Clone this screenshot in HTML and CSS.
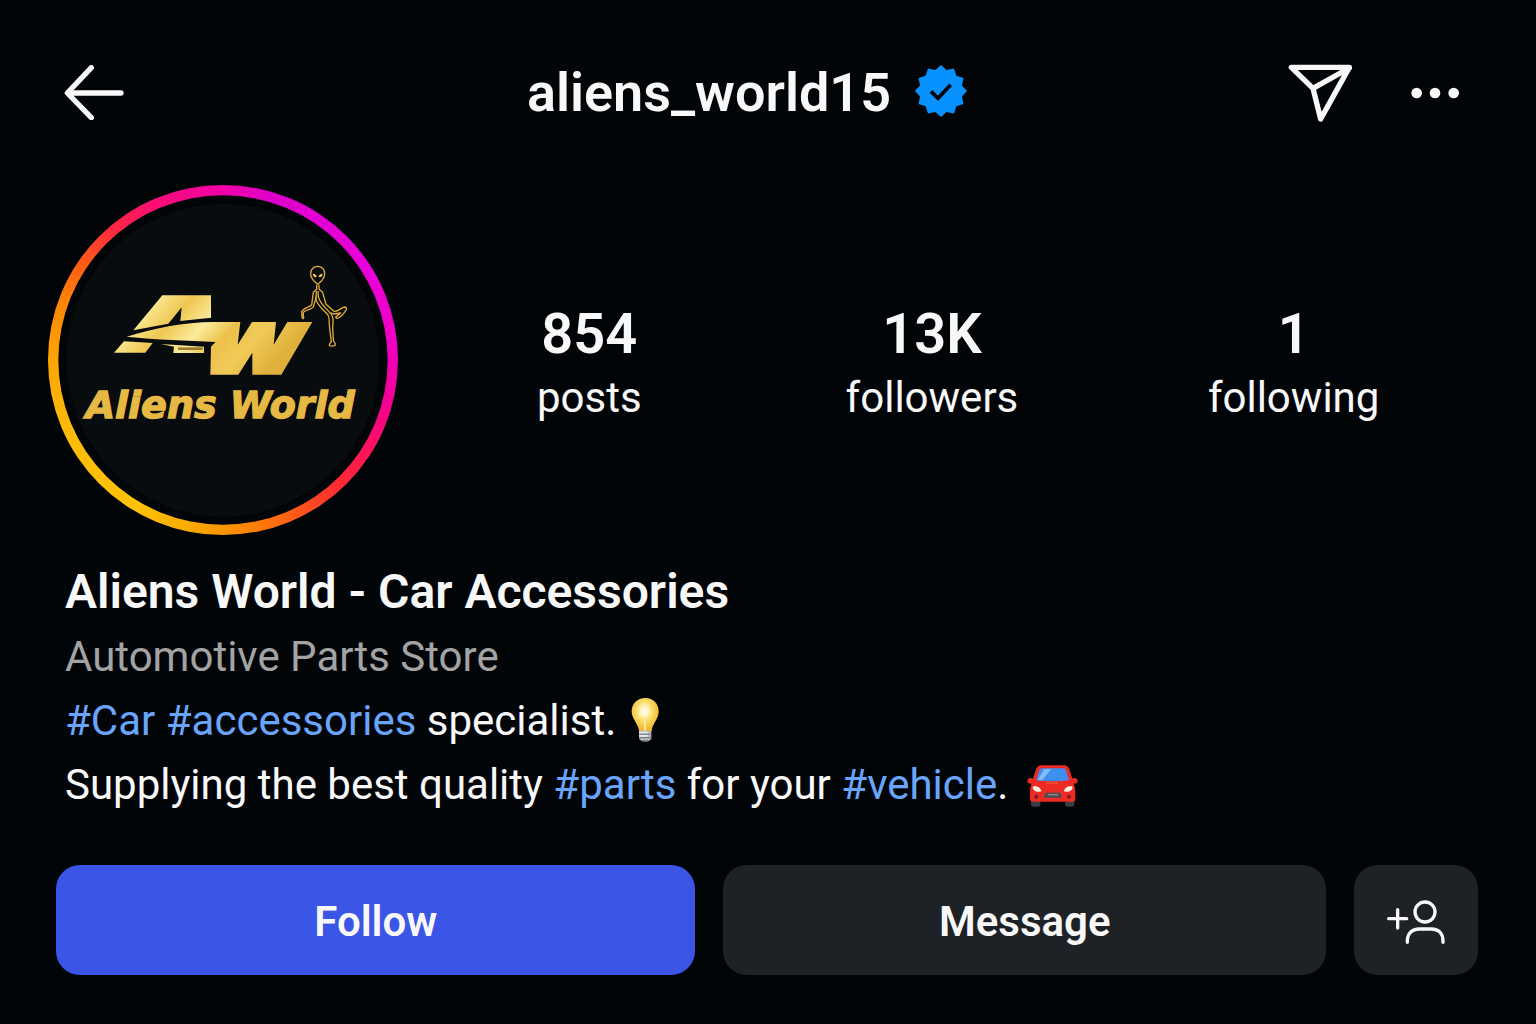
FILE: index.html
```html
<!DOCTYPE html>
<html lang="en">
  <head>
    <meta charset="UTF-8" />
    <meta name="viewport" content="width=device-width, initial-scale=1.0" />
    <title>aliens_world15</title>
    <link rel="stylesheet" href="styles.css">
  </head>
  <body>
    <header class="top-bar">
      <button class="icon-button" aria-label="Back">
        <svg class="icon-back" viewBox="42 44 180 165">
          <path d="M124 52L52 128L124 202M54 128H213" />
        </svg>
      </button>
      <div class="title">
        <h1>aliens_world15</h1>
        <svg class="badge" viewBox="0 0 156 156" role="img" aria-label="Verified">
          <path class="badge-shape" d="" />
          <path class="badge-check" d="M48 79L69 100L107 59" />
        </svg>
      </div>
      <div class="top-actions">
        <button class="icon-button" aria-label="Share">
          <svg class="icon-send" viewBox="54 38 195 174">
            <path d="M64 48H238L152 203L129 111ZM129 111L238 50" />
          </svg>
        </button>
        <button class="icon-button" aria-label="More">
          <svg class="icon-more" viewBox="423 106 147 36">
            <circle cx="440" cy="124" r="16" />
            <circle cx="495" cy="124" r="16" />
            <circle cx="551" cy="124" r="16" />
          </svg>
        </button>
      </div>
    </header>

    <main>
      <section class="profile">
        <a href="#story" class="avatar" aria-label="Aliens World story">
          <svg viewBox="24 30 1050 1050">
            <defs>
              <linearGradient id="gold" x1="0" y1="0" x2="1" y2="0.35">
                <stop offset="0" stop-color="#e9c95f" />
                <stop offset="0.22" stop-color="#f8e58c" />
                <stop offset="0.36" stop-color="#efc650" />
                <stop offset="0.52" stop-color="#fbeb9c" />
                <stop offset="0.66" stop-color="#ecc14a" />
                <stop offset="0.8" stop-color="#f0ca58" />
                <stop offset="1" stop-color="#dfb03a" />
              </linearGradient>
            </defs>
            <circle class="ring-gap" cx="549" cy="555" r="494" />
            <circle class="disc" cx="549" cy="556" r="469" />
            <!-- monogram -->
            <path class="mark" transform="translate(180 225)" d="M100 241L187 136H333V203L241 213L245 172L205 221ZM80 260C160 236 250 216 340 216H421L413 284L456 216H528L521 284L562 216H637L544 374H457V308L415 374H331L333 290L347 276C260 270 170 270 80 260ZM42 308L72 274L158 279L136 308ZM182 282L312 290V309H220L222 290Z" />
            <path class="mark-line" transform="translate(180 225)" d="M234 296H308" />
            <!-- alien -->
            <g class="alien" transform="translate(750 240)">
              <path d="M83 34C96 34 104 44 104 56C104 69 92 81 83 88C74 81 62 69 62 56C62 44 70 34 83 34Z" />
              <path class="eyes" d="M68 56C75 56 80 60 80 66C73 68 69 63 68 56ZM98 56C91 56 86 60 86 66C93 68 97 63 98 56Z" />
              <path d="M80 89V103L70 112L65 150C56 158 40 158 35 170L36 187C40 194 43 190 40 184V172C46 163 66 164 70 156L79 124" />
              <path d="M87 89V103L98 112L108 148L132 169C142 172 146 162 163 156C172 156 171 163 165 170C158 180 148 190 140 190L137 186L152 174L130 177L122 173" />
              <path d="M79 108L78 134C84 154 99 162 114 180C120 190 116 198 119 220L124 260L118 268C116 276 132 274 136 270C138 262 130 262 130 256L128 215C130 200 132 190 124 178L106 158C94 146 88 138 85 124L84 108" />
            </g>
            <text class="wordmark" x="137" y="728">Aliens World</text>
          </svg>
        </a>
        <ul class="stats">
          <li><strong>854</strong><span>posts</span></li>
          <li><a href="#followers"><strong>13K</strong><span>followers</span></a></li>
          <li><a href="#following"><strong>1</strong><span>following</span></a></li>
        </ul>
      </section>

      <section class="bio">
        <h2>Aliens World - Car Accessories</h2>
        <p class="category">Automotive Parts Store</p>
        <p>
          <a href="#car">#Car</a> <a href="#accessories">#accessories</a> specialist.
          <svg class="emoji-bulb" viewBox="30 18 90 138" role="img" aria-label="Light bulb">
            <defs>
              <radialGradient id="bulb" cx="0.47" cy="0.4" r="0.6">
                <stop offset="0" stop-color="#ffffff" />
                <stop offset="0.22" stop-color="#fff6c4" />
                <stop offset="0.5" stop-color="#fbdc68" />
                <stop offset="1" stop-color="#f0b429" />
              </radialGradient>
            </defs>
            <path fill="url(#bulb)" d="M73 21C97 21 113 38 113 61C113 84 95 96 92 120H54C51 96 32 84 32 61C32 38 49 21 73 21Z" />
            <path fill="#f7e9a0" d="M69 78H75V119H69Z" />
            <path fill="#b9bcc0" d="M54 119H91V143L83 151H63L54 143Z" />
            <path fill="#eceef0" d="M54 122H80V127H54ZM54 132H80V137H54Z" />
            <path fill="#74777b" d="M54 128H91V131H54ZM54 138H91V142H54ZM62 147H84L80 152H66Z" />
          </svg>
        </p>
        <p>
          Supplying the best quality <a href="#parts">#parts</a> for your <a href="#vehicle">#vehicle</a>.
          <svg class="emoji-car" viewBox="36 38 153 126" role="img" aria-label="Car">
            <rect fill="#3a3d42" x="48" y="138" width="28" height="25" rx="8" />
            <rect fill="#3a3d42" x="150" y="138" width="28" height="25" rx="8" />
            <path fill="#ee2a24" d="M78 39H148C157 39 161 46 164 54L172 79C178 75 188 78 188 86C188 93 182 94 176 94C180 102 181 112 181 126V140C181 146 177 148 172 148H54C49 148 45 146 45 140V126C45 112 46 102 50 94C43 94 37 93 37 86C37 78 47 75 54 79L62 54C65 46 69 39 78 39Z" />
            <path fill="#3f8ff0" d="M82 48H144C149 48 152 51 154 56L162 84C130 88 96 88 64 84L72 56C74 51 77 48 82 48Z" />
            <path fill="#82bbfa" d="M88 50H108L82 84L68 83Z" />
            <path fill="#fff3e6" d="M53 103C65 99 76 105 80 117C70 120 54 119 53 103ZM173 103C161 99 150 105 146 117C156 120 172 119 173 103Z" />
            <path fill="#4a4c52" d="M92 121H136L140 136H86Z" />
            <path fill="#8d8f94" d="M98 125H130V129H98Z" />
            <circle fill="#71201f" cx="64" cy="133" r="6" />
            <circle fill="#71201f" cx="162" cy="133" r="6" />
            <path stroke="#ff9a3c" stroke-width="3" stroke-dasharray="4 3" d="M94 92H126" />
          </svg>
        </p>
      </section>

      <section class="actions">
        <button class="follow">Follow</button>
        <button>Message</button>
        <button class="suggest" aria-label="Suggested accounts">
          <svg viewBox="130 130 180 138">
            <path d="M138 189H192M165 162V217" />
            <circle cx="247" cy="169" r="30" />
            <path d="M194 260V256C194 234 208 220 230 220H266C288 220 301 234 301 256V260" />
          </svg>
        </button>
      </section>
    </main>

    <script>
      // twelve-point edge of the verified badge
      var points = [];
      for (var i = 0; i < 24; i++) {
        var r = i % 2 ? 65 : 78;
        var a = (i * Math.PI) / 12;
        points.push((78 + r * Math.sin(a)).toFixed(1) + " " + (78 - r * Math.cos(a)).toFixed(1));
      }
      document.querySelector(".badge-shape").setAttribute("d", "M" + points.join("L") + "Z");
    </script>
  </body>
</html>
```
FILE: styles.css
```css
* {
  box-sizing: border-box;
}

body {
  margin: 0;
  background-color: #020508;
  color: #f8f8f8;
  font-family: Roboto, sans-serif;
  font-size: 42px;
  line-height: 64px;
}

h1,
h2,
p,
ul {
  margin: 0;
  padding: 0;
}

a {
  color: inherit;
  text-decoration: none;
}

button {
  border: none;
  padding: 0;
  color: inherit;
  font: inherit;
  cursor: pointer;
}

svg {
  display: block;
  fill: none;
}

.top-bar {
  display: grid;
  grid-template-columns: 1fr auto 1fr;
  align-items: center;
  height: 185px;
  padding: 0 76px 0 64px;
}

.icon-button {
  justify-self: start;
  background: none;
}

.icon-button path {
  stroke: #f8f8f8;
  stroke-width: 16;
  stroke-linecap: round;
  stroke-linejoin: round;
}

.icon-back {
  width: 60px;
}

.icon-send {
  width: 65px;
}

.icon-more {
  width: 49px;
}

.icon-more circle {
  fill: #f8f8f8;
}

.title {
  display: flex;
  align-items: center;
  gap: 24px;
  padding-right: 30px;
}

h1 {
  font-size: 54px;
  font-weight: 600;
}

.badge {
  width: 52px;
  margin-bottom: 4px;
}

.badge-shape {
  fill: #0892ff;
  stroke-linejoin: round;
}

.badge-check {
  stroke: #020508;
  stroke-width: 11;
}

.top-actions {
  display: flex;
  justify-content: flex-end;
  align-items: center;
  gap: 58px;
}

.profile {
  display: grid;
  grid-template-columns: 350px 1fr;
  align-items: center;
  gap: 20px;
  padding: 0 52px 0 48px;
}

.avatar {
  border-radius: 50%;
  background: conic-gradient(
    #f000a8 0deg,
    #dd00cc 18deg,
    #ea00da 60deg,
    #f000c0 85deg,
    #f50090 105deg,
    #fc1060 120deg,
    #ff2c30 138deg,
    #ff5a18 155deg,
    #ff8505 172deg,
    #f8a800 190deg,
    #ffc208 210deg,
    #fdbc08 245deg,
    #fba505 270deg,
    #ff8505 290deg,
    #ff5a18 305deg,
    #ff2840 320deg,
    #fb0f70 335deg,
    #f000a8 360deg
  );
}

.ring-gap {
  fill: #020508;
}

.disc {
  fill: #090c0f;
}

.mark {
  fill: url(#gold);
}

.mark-line {
  stroke: #9a7a2c;
  stroke-width: 8;
}

.alien {
  stroke: #dcab3c;
  stroke-width: 4;
  stroke-linejoin: round;
}

.eyes {
  fill: #f3cf62;
  stroke: none;
}

.wordmark {
  fill: #e6b945;
  stroke: #e6b945;
  stroke-width: 4;
  font-family: "DejaVu Sans", sans-serif;
  font-size: 114px;
  font-style: italic;
  font-weight: bold;
}

.stats {
  display: grid;
  grid-template-columns: 9fr 9fr 10fr;
  padding-top: 12px;
  list-style: none;
  text-align: center;
}

.stats strong,
.stats span {
  display: block;
}

.stats strong {
  font-size: 56px;
  font-weight: 600;
}

.bio {
  margin-top: 24px;
  padding: 0 65px;
}

.bio h2 {
  font-size: 48px;
  font-weight: 600;
  line-height: 66px;
}

.bio a {
  color: #69a5fc;
}

.bio .category {
  color: #a3a3a3;
}

.bio svg {
  display: inline-block;
  vertical-align: -8px;
}

.emoji-bulb {
  width: 30px;
  margin-left: 4px;
}

.emoji-car {
  width: 51px;
  margin-left: 8px;
}

.actions {
  display: grid;
  grid-template-columns: 640fr 603fr 124px;
  gap: 28px;
  padding: 48px 58px 48px 56px;
}

.actions button {
  height: 110px;
  padding-top: 4px;
  border-radius: 24px;
  background-color: #1e2125;
  font-weight: 600;
}

.actions .follow {
  background-color: #3b55e6;
}

.suggest svg {
  width: 60px;
  margin: 0 auto;
  stroke: #f8f8f8;
  stroke-width: 10;
  stroke-linecap: round;
}
```
